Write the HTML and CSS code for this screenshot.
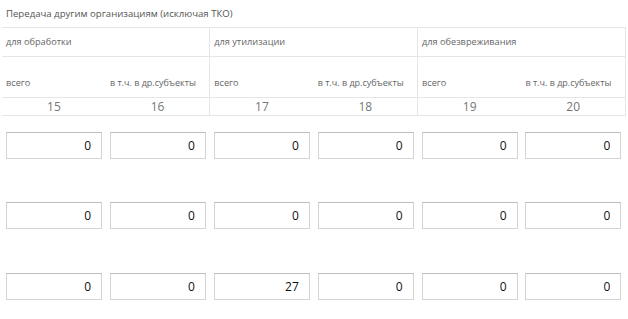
FILE: index.html
```html
<!DOCTYPE html>
<html>
<head>
    <meta charset="utf-8">
    <link rel="stylesheet" href="styles.css">
</head>
<body>
<table class="grid">
    <tr class="title-row">
        <td colspan="6">Передача другим организациям (исключая ТКО)</td>
    </tr>
    <tr class="group-row">
        <td colspan="2" class="sep">для обработки</td>
        <td colspan="2" class="sep">для утилизации</td>
        <td colspan="2" class="sep">для обезвреживания</td>
    </tr>
    <tr class="sub-row">
        <td>всего</td>
        <td class="sep">в т.ч. в др.субъекты</td>
        <td>всего</td>
        <td class="sep">в т.ч. в др.субъекты</td>
        <td>всего</td>
        <td class="sep">в т.ч. в др.субъекты</td>
    </tr>
    <tr class="num-row">
        <td>15</td>
        <td class="sep">16</td>
        <td>17</td>
        <td class="sep">18</td>
        <td>19</td>
        <td class="sep">20</td>
    </tr>
    <tr class="val-row">
        <td><input class="val" type="text" value="0"></td>
        <td><input class="val" type="text" value="0"></td>
        <td><input class="val" type="text" value="0"></td>
        <td><input class="val" type="text" value="0"></td>
        <td><input class="val" type="text" value="0"></td>
        <td><input class="val" type="text" value="0"></td>
    </tr>
    <tr class="val-row">
        <td><input class="val" type="text" value="0"></td>
        <td><input class="val" type="text" value="0"></td>
        <td><input class="val" type="text" value="0"></td>
        <td><input class="val" type="text" value="0"></td>
        <td><input class="val" type="text" value="0"></td>
        <td><input class="val" type="text" value="0"></td>
    </tr>
    <tr class="val-row">
        <td><input class="val" type="text" value="0"></td>
        <td><input class="val" type="text" value="0"></td>
        <td><input class="val" type="text" value="27"></td>
        <td><input class="val" type="text" value="0"></td>
        <td><input class="val" type="text" value="0"></td>
        <td><input class="val" type="text" value="0"></td>
    </tr>
</table>
</body>
</html>
```

FILE: styles.css
```css
body {
    margin: 0;
    background: #fff;
    font-family: "Open Sans", "Noto Sans", sans-serif;
    color: #666;
}

.grid {
    margin-left: 2px;
    border-collapse: collapse;
    table-layout: fixed;
    width: 624px;
}

.grid td {
    width: 104px;
    padding: 0 0 0 4px;
    box-sizing: border-box;
    font-size: 9.2px;
    text-align: left;
    white-space: nowrap;
}

.title-row td {
    height: 27px;
    border-bottom: 1px solid #e6e6e6;
    font-size: 9.6px;
    color: #555;
}

.group-row td {
    height: 29px;
    border-bottom: 1px solid #e6e6e6;
}

.sub-row td {
    height: 41px;
    vertical-align: bottom;
    padding-bottom: 8px;
    border-bottom: 1px solid #e6e6e6;
}

.sub-row td.sep {
    font-size: 9px;
}

.num-row td {
    height: 18px;
    text-align: center;
    padding: 0;
    font-size: 12px;
    color: #777;
    border-bottom: 1px solid #e6e6e6;
}

.grid td.sep {
    border-right: 1px solid #e6e6e6;
}

.val-row td {
    height: 71px;
    vertical-align: top;
    padding-top: 16px;
}

.val {
    width: 96px;
    height: 27px;
    box-sizing: border-box;
    margin: 0;
    padding: 0 10px 0 4px;
    border: 1px solid #d4d4d4;
    border-top-color: #bdbdbd;
    text-align: right;
    font-family: "Open Sans", "Noto Sans", sans-serif;
    font-size: 12px;
    color: #111;
    background: #fff;
    outline: none;
}
```
